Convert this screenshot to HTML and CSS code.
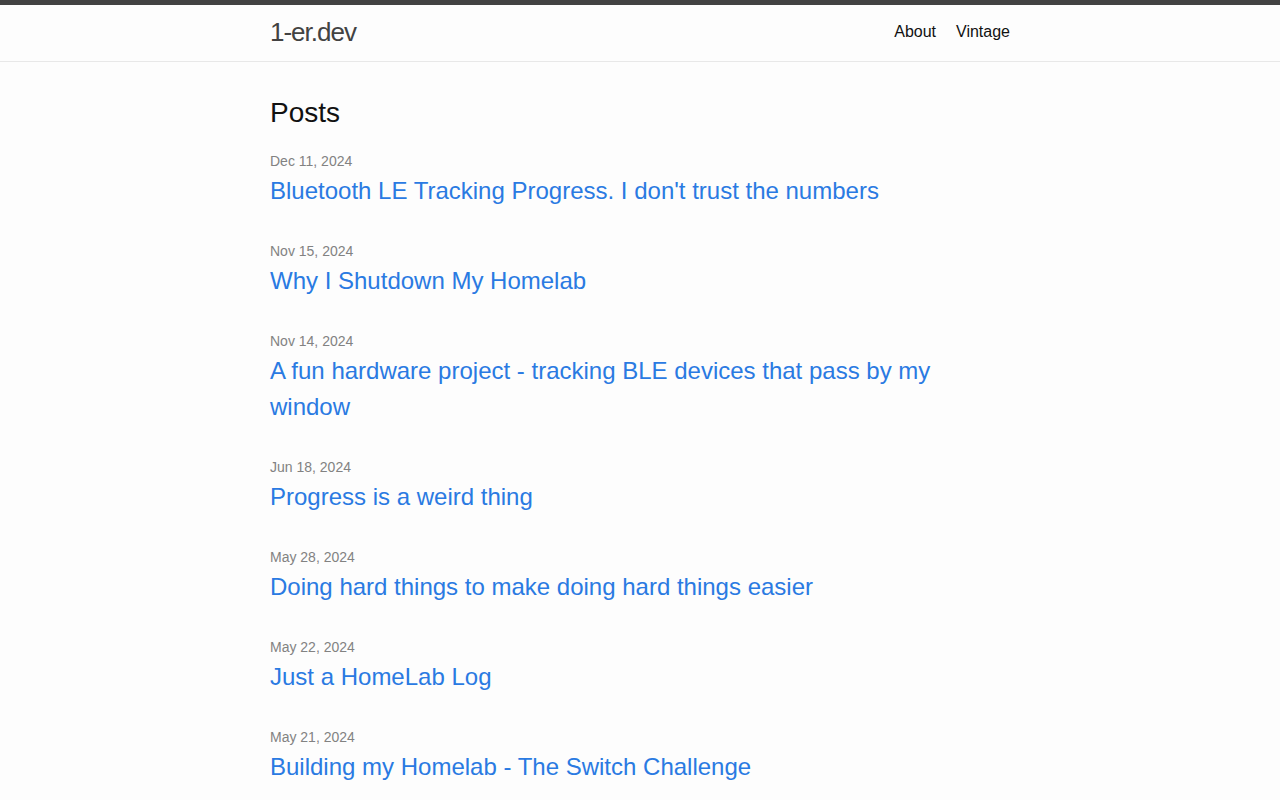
FILE: index.html
```html
<!DOCTYPE html>
<html lang="en">
<head>
<meta charset="utf-8">
<title>1-er.dev</title>
<link rel="stylesheet" href="styles.css">
</head>
<body>
<header class="site-header">
  <div class="wrapper header-row">
    <a class="site-title" href="#">1-er.dev</a>
    <nav class="site-nav">
      <a class="page-link" href="#">About</a>
      <a class="page-link" href="#">Vintage</a>
    </nav>
  </div>
</header>
<main class="page-content">
  <div class="wrapper">
    <h2 class="post-list-heading">Posts</h2>
    <ul class="post-list">
      <li><span class="post-meta">Dec 11, 2024</span><h3><a class="post-link" href="#">Bluetooth LE Tracking Progress. I don't trust the numbers</a></h3></li>
      <li><span class="post-meta">Nov 15, 2024</span><h3><a class="post-link" href="#">Why I Shutdown My Homelab</a></h3></li>
      <li><span class="post-meta">Nov 14, 2024</span><h3><a class="post-link" href="#">A fun hardware project - tracking BLE devices that pass by my window</a></h3></li>
      <li><span class="post-meta">Jun 18, 2024</span><h3><a class="post-link" href="#">Progress is a weird thing</a></h3></li>
      <li><span class="post-meta">May 28, 2024</span><h3><a class="post-link" href="#">Doing hard things to make doing hard things easier</a></h3></li>
      <li><span class="post-meta">May 22, 2024</span><h3><a class="post-link" href="#">Just a HomeLab Log</a></h3></li>
      <li><span class="post-meta">May 21, 2024</span><h3><a class="post-link" href="#">Building my Homelab - The Switch Challenge</a></h3></li>
    </ul>
  </div>
</main>
</body>
</html>
```
FILE: styles.css
```css
html, body {
  margin: 0;
  padding: 0;
}
body {
  background: #fdfdfd;
  color: #111111;
  font-family: "Liberation Sans", Arial, sans-serif;
  font-size: 16px;
  font-weight: 400;
  line-height: 1.5;
}
a {
  text-decoration: none;
}
.wrapper {
  max-width: 740px;
  margin: 0 auto;
  padding: 0 30px;
}
.site-header {
  border-top: 5px solid #424242;
  border-bottom: 1px solid #e8e8e8;
  min-height: 56px;
}
.header-row {
  display: flex;
  justify-content: space-between;
  align-items: flex-start;
}
.site-title {
  font-size: 26px;
  font-weight: 300;
  line-height: 54px;
  letter-spacing: -1px;
  color: #424242;
}
.site-nav {
  line-height: 54px;
  display: flex;
  gap: 20px;
}
.page-link {
  color: #111111;
  line-height: 54px;
}
.page-content {
  padding: 30px 0;
}
.post-list-heading {
  font-size: 28px;
  font-weight: 400;
  margin: 0 0 15px;
  line-height: 1.5;
}
.post-list {
  list-style: none;
  margin: 0;
  padding: 0;
}
.post-list li {
  margin-bottom: 30px;
}
.post-list h3 {
  margin: 0 0 15px;
  font-weight: 400;
  font-size: 18.72px;
}
.post-meta {
  font-size: 14px;
  color: #828282;
}
.post-link {
  display: block;
  font-size: 24px;
  color: #2a7ae2;
}
```
